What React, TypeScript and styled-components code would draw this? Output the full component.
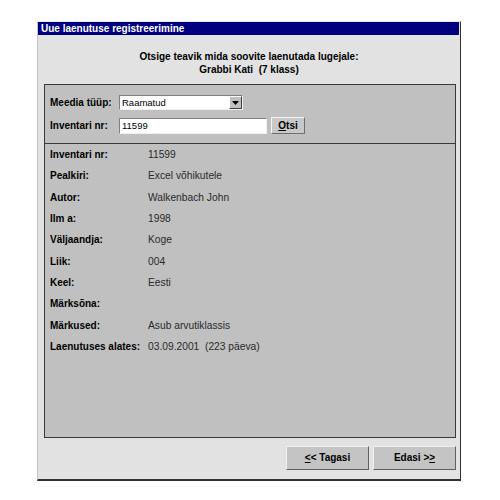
import React from "react";
import styled, { createGlobalStyle } from "styled-components";

const Global = createGlobalStyle`
  html, body { margin: 0; padding: 0; background: #ffffff; }
  body { font-family: "Liberation Sans", Arial, sans-serif; }
`;

const Page = styled.div`
  padding: 21px 0 0 37px;
`;

const Window = styled.div`
  width: 422px;
  height: 457px;
  background: #e2e2e2;
  border-left: 1px solid #c4c4c4;
  border-top: 1px solid #e8e8e8;
  border-right: 1px solid #303030;
  border-bottom: 2px solid #303030;
  display: flex;
  flex-direction: column;
`;

const TitleBar = styled.div`
  height: 13px;
  background: #00007f;
  color: #ffffff;
  font-weight: bold;
  font-size: 10px;
  line-height: 13px;
  padding-left: 3px;
  margin-right: 1px;
  white-space: nowrap;
`;

const Header = styled.div`
  height: 49px;
  box-sizing: border-box;
  padding-top: 15px;
  text-align: center;
  font-weight: bold;
  font-size: 10px;
  line-height: 13px;
  color: #000;
`;

const Panel = styled.div`
  margin: 0 4px 0 6px;
  height: 354px;
  box-sizing: border-box;
  background: #c0c0c0;
  border: 1px solid #3a3a3a;
  display: flex;
  flex-direction: column;
`;

const SearchArea = styled.div`
  padding: 10px 0 9px 5px;
  border-bottom: 1px solid #3a3a3a;
  display: flex;
  flex-direction: column;
  gap: 7px;
`;

const FormRow = styled.div`
  display: flex;
  align-items: center;
`;

const FormLabel = styled.div`
  width: 69px;
  font-weight: bold;
  font-size: 10px;
  color: #000;
  white-space: nowrap;
`;

const Combo = styled.div`
  width: 124px;
  height: 15px;
  box-sizing: border-box;
  background: #fff;
  border-top: 1px solid #808080;
  border-left: 1px solid #808080;
  border-right: 1px solid #f0f0f0;
  border-bottom: 1px solid #f0f0f0;
  display: flex;
  align-items: center;
  font-size: 9.5px;
  color: #000;
`;

const ComboText = styled.div`
  flex: 1;
  padding-left: 2px;
`;

const ComboArrow = styled.div`
  width: 13px;
  height: 13px;
  box-sizing: border-box;
  background: #c0c0c0;
  border-top: 1px solid #ffffff;
  border-left: 1px solid #ffffff;
  border-right: 1px solid #404040;
  border-bottom: 1px solid #404040;
  display: flex;
  align-items: center;
  justify-content: center;
`;

const TextField = styled.div`
  width: 148px;
  height: 16px;
  box-sizing: border-box;
  background: #fff;
  border-top: 1px solid #808080;
  border-left: 1px solid #808080;
  border-right: 1px solid #f0f0f0;
  border-bottom: 1px solid #f0f0f0;
  font-size: 9.5px;
  line-height: 14px;
  padding-left: 2px;
  color: #000;
`;

const SmallButton = styled.div`
  margin-left: 4px;
  width: 34px;
  height: 17px;
  box-sizing: border-box;
  background: #c8c8c8;
  border-top: 1px solid #f4f4f4;
  border-left: 1px solid #f4f4f4;
  border-right: 1px solid #707070;
  border-bottom: 1px solid #707070;
  font-weight: bold;
  font-size: 10px;
  line-height: 15px;
  text-align: center;
  color: #000;
`;

const Details = styled.div`
  padding-left: 5px;
  display: grid;
  grid-template-columns: 98px 1fr;
  grid-auto-rows: 21.333px;
  align-items: center;
`;

const DLabel = styled.div`
  font-weight: bold;
  font-size: 10px;
  color: #000;
  white-space: nowrap;
`;

const DValue = styled.div`
  font-size: 10.25px;
  color: #2a2a2a;
  white-space: pre;
`;

const Footer = styled.div`
  display: flex;
  justify-content: flex-end;
  gap: 4px;
  margin: 8px 4px 0 0;
`;

const NavButton = styled.div`
  width: 83px;
  height: 24px;
  box-sizing: border-box;
  background: #c4c4c4;
  border-top: 1px solid #f0f0f0;
  border-left: 1px solid #f0f0f0;
  border-right: 1px solid #606060;
  border-bottom: 1px solid #606060;
  font-weight: bold;
  font-size: 10px;
  line-height: 22px;
  text-align: center;
  color: #000;
`;

const U = styled.span`
  text-decoration: underline;
`;

const rows: [string, string][] = [
  ["Inventari nr:", "11599"],
  ["Pealkiri:", "Excel võhikutele"],
  ["Autor:", "Walkenbach John"],
  ["Ilm a:", "1998"],
  ["Väljaandja:", "Koge"],
  ["Liik:", "004"],
  ["Keel:", "Eesti"],
  ["Märksõna:", ""],
  ["Märkused:", "Asub arvutiklassis"],
  ["Laenutuses alates:", "03.09.2001  (223 päeva)"],
];

export default function App() {
  return (
    <Page>
      <Global />
      <Window>
        <TitleBar>Uue laenutuse registreerimine</TitleBar>
        <Header>
          <div>Otsige teavik mida soovite laenutada lugejale:</div>
          <div>Grabbi Kati&nbsp; (7 klass)</div>
        </Header>
        <Panel>
          <SearchArea>
            <FormRow>
              <FormLabel>Meedia tüüp:</FormLabel>
              <Combo>
                <ComboText>Raamatud</ComboText>
                <ComboArrow>
                  <svg width="7" height="4" viewBox="0 0 7 4">
                    <polygon points="0,0 7,0 3.5,4" fill="#000" />
                  </svg>
                </ComboArrow>
              </Combo>
            </FormRow>
            <FormRow>
              <FormLabel>Inventari nr:</FormLabel>
              <TextField>11599</TextField>
              <SmallButton>
                <U>O</U>tsi
              </SmallButton>
            </FormRow>
          </SearchArea>
          <Details>
            {rows.map(([l, v]) => (
              <React.Fragment key={l}>
                <DLabel>{l}</DLabel>
                <DValue>{v}</DValue>
              </React.Fragment>
            ))}
          </Details>
        </Panel>
        <Footer>
          <NavButton>
            <U>&lt;</U>&lt; Tagasi
          </NavButton>
          <NavButton>
            Edasi &gt;<U>&gt;</U>
          </NavButton>
        </Footer>
      </Window>
    </Page>
  );
}
